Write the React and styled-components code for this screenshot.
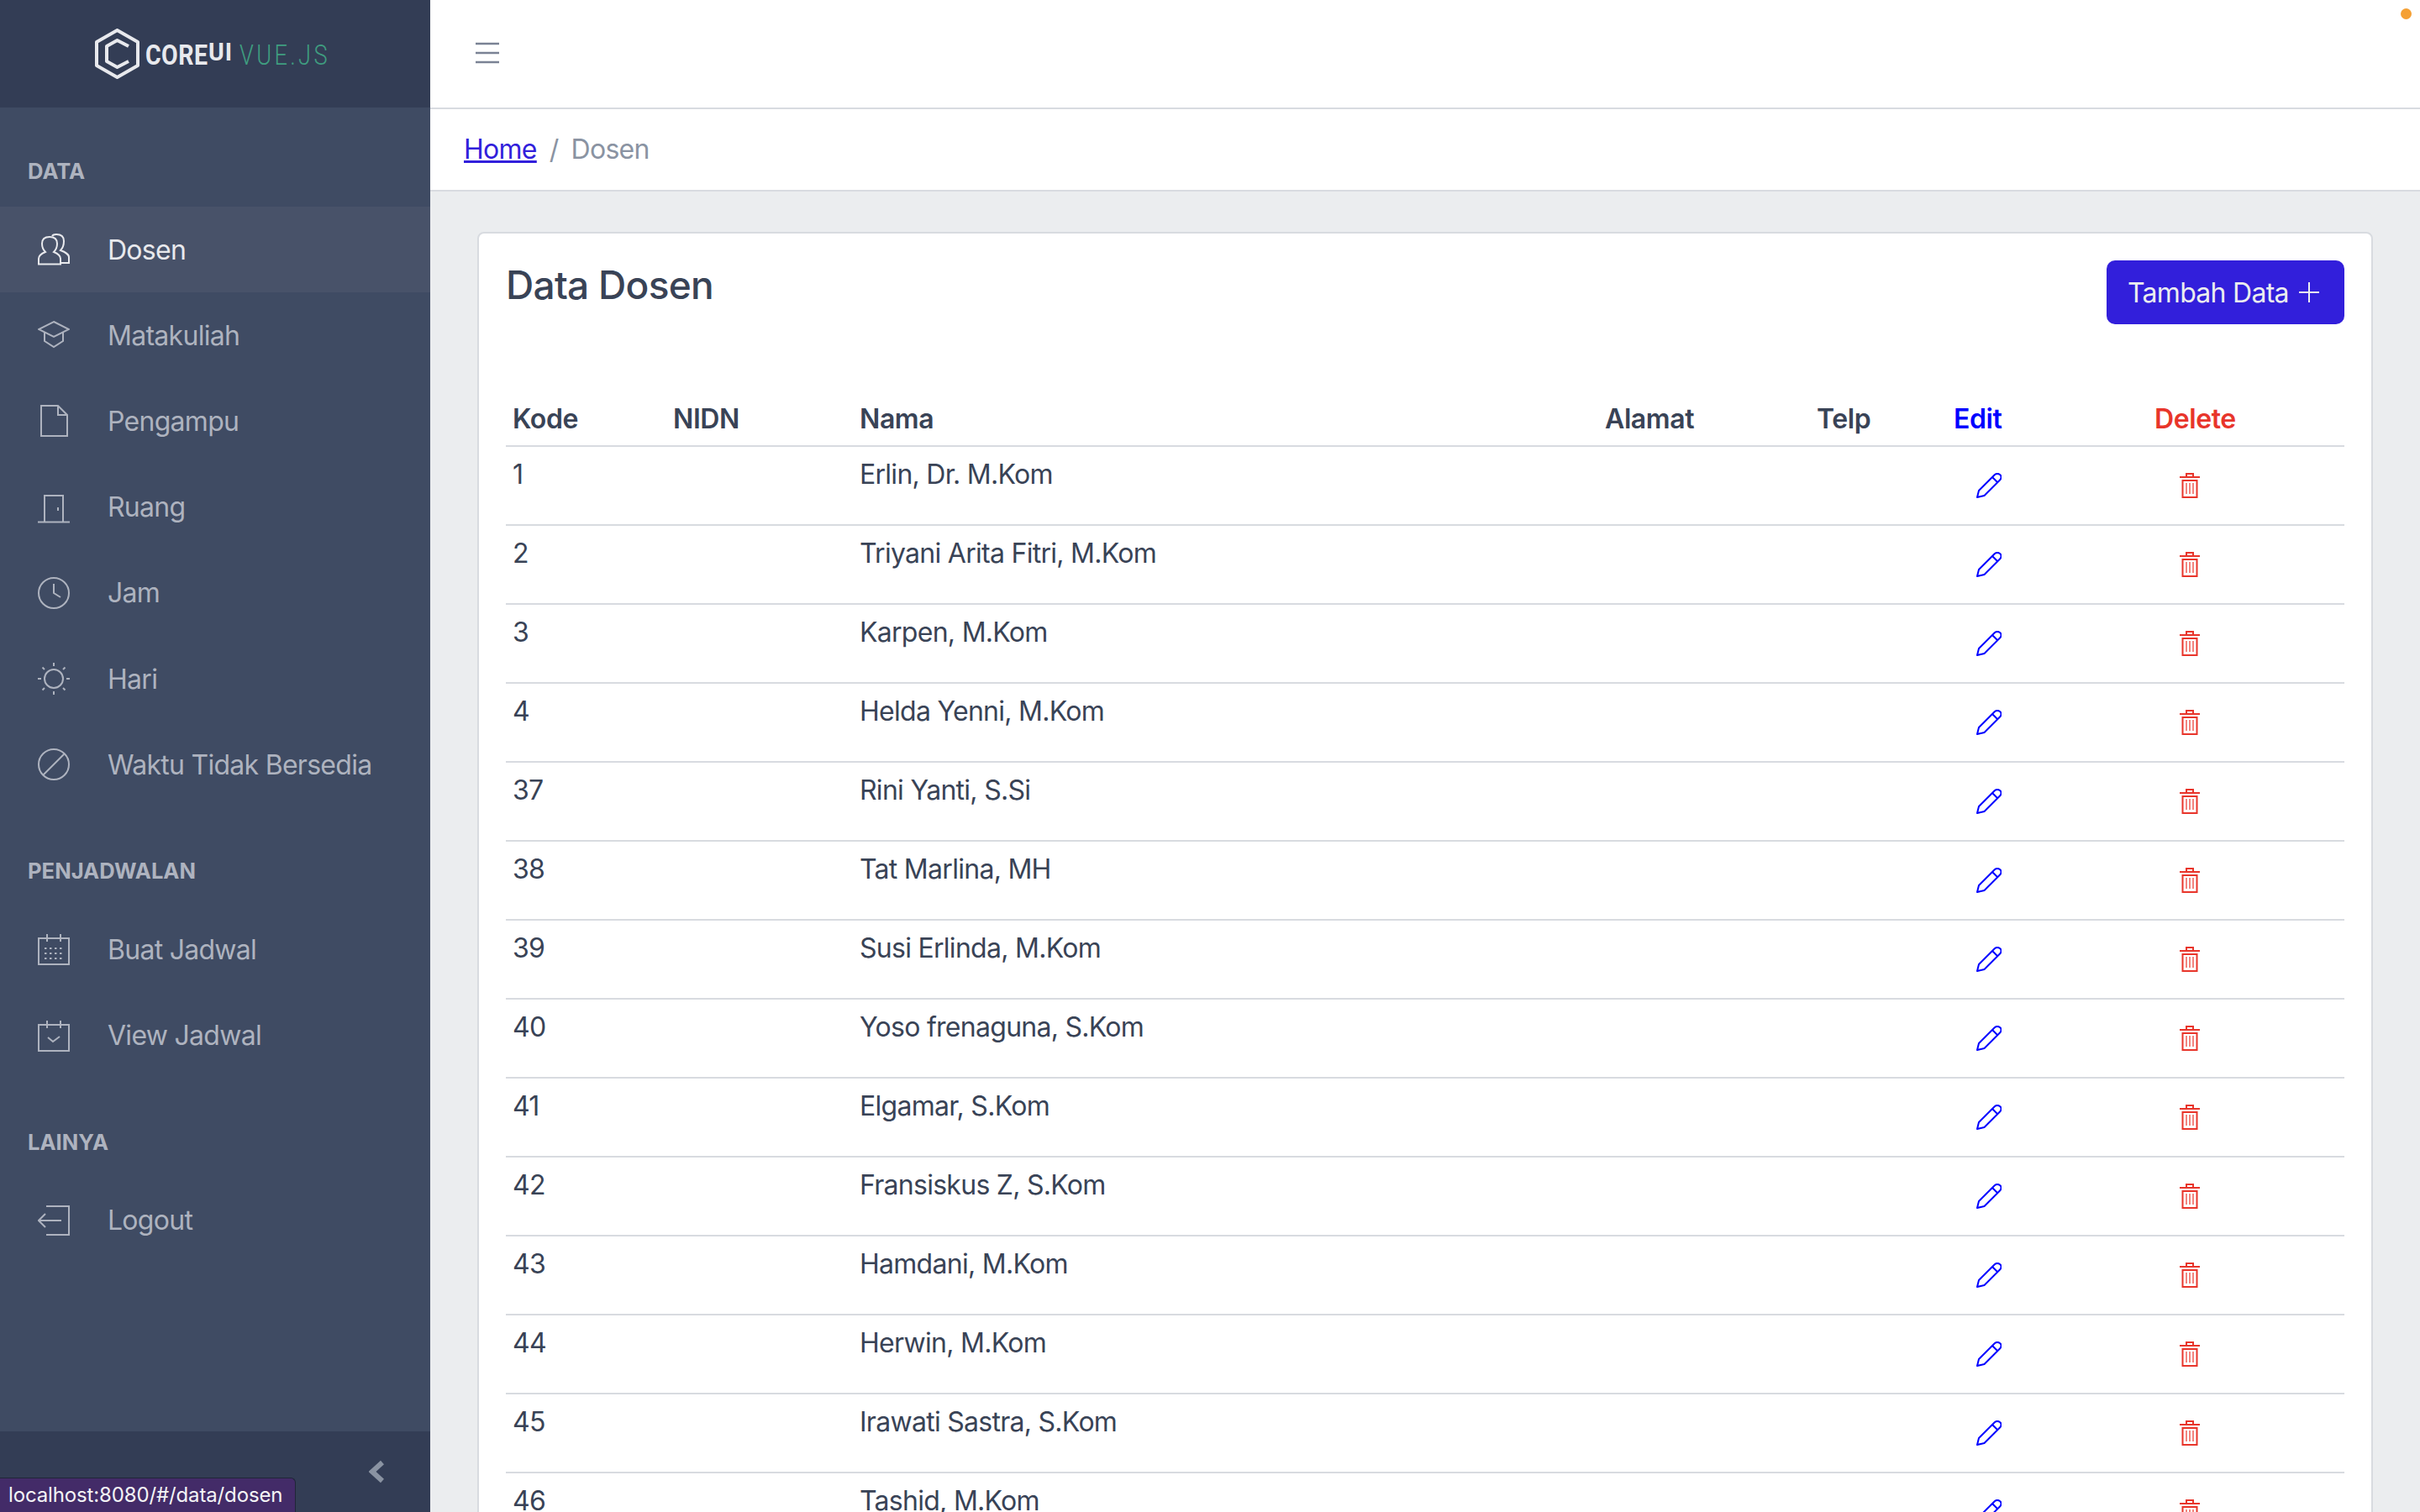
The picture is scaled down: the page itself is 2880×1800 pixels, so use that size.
import React from "react";
import styled, { createGlobalStyle } from "styled-components";

const Global = createGlobalStyle`
  html, body { margin: 0; padding: 0; height: 100%; overflow: hidden; }
  body { font-family: Inter, "Noto Sans", "Liberation Sans", sans-serif; color: #394356; background: #ebedef; }
  * { box-sizing: border-box; }
`;

const Page = styled.div`
  position: relative; display: flex; width: 2880px; height: 1800px; overflow: hidden;
`;
const Sidebar = styled.aside`
  flex: 0 0 512px; display: flex; flex-direction: column; background: #3f4b63; height: 100%;
`;
const Brand = styled.div`
  flex: 0 0 128px; display: flex; align-items: center; gap: 7px;
  background: #333d55; padding-left: 113px;
`;
const BrandText = styled.div`
  display: flex; align-items: flex-start; height: 24px; line-height: 26px;
`;
const Core = styled.span`
  display: inline-block; width: 75px; transform: scaleX(.84); transform-origin: left;
  font-family: Roboto, sans-serif; font-weight: 700; font-size: 34px; color: #e8e9ed; letter-spacing: .5px;
`;
const Ui = styled.span`
  display: inline-block; width: 37px; transform: scaleX(.95); transform-origin: left;
  font-family: Roboto, sans-serif; font-weight: 700; font-size: 30px; line-height: 20px; color: #e8e9ed; letter-spacing: 1px;
`;
const Vue = styled.span`
  display: inline-block; transform: scaleX(.8); transform-origin: left;
  font-family: Roboto, sans-serif; font-weight: 300; font-size: 34px; color: #3f9d80; letter-spacing: 4.2px;
`;
const Nav = styled.nav`
  flex: 1; display: flex; flex-direction: column;
`;
const NavTitle = styled.div`
  height: 86px; margin-top: 32px; padding: 33px 0 0 33px; line-height: 22px;
  font-size: 25.6px; font-weight: 700; color: #aeb3bf; text-transform: uppercase;
`;
const NavItem = styled.a`
  display: flex; align-items: center; height: 102.2px; padding-left: 45px; font-size: 32px; letter-spacing: -.72px;
  color: ${p => (p.$active ? "#e8e9ed" : "#aeb3bf")};
  background: ${p => (p.$active ? "#485269" : "transparent")};
`;
const NavIcon = styled.svg`
  flex: 0 0 38px; width: 38px; height: 38px; margin-right: 45px;
  fill: none; stroke: currentColor; stroke-width: 2;
`;
const SideFooter = styled.div`
  flex: 0 0 96px; display: flex; align-items: center; justify-content: flex-end; padding-right: 55px; background: #333d55;
`;
const StatusBubble = styled.div`
  position: absolute; left: 0; bottom: 0; width: 352px; height: 41px; padding: 4px 0 0 10px;
  background: #432b68; border: 1px solid #1f2638; border-left: 0; border-bottom: 0; border-top-right-radius: 6px;
  color: #f4f4f6; font-size: 24px; line-height: 32px; letter-spacing: -.14px; white-space: nowrap;
`;
const Dot = styled.span`
  position: absolute; top: 10px; right: 10px; width: 13px; height: 13px; border-radius: 50%; background: #f5a033;
`;
const Main = styled.main`
  flex: 1; min-width: 0; display: flex; flex-direction: column; height: 100%;
`;
const Header = styled.header`
  flex: 0 0 130px; display: flex; align-items: center; padding: 0 0 3px 54px;
  background: #fff; border-bottom: 2px solid #d8dbe0;
`;
const Crumbs = styled.div`
  flex: 0 0 98px; display: flex; align-items: center; padding: 0 0 1px 40px; font-size: 32px; letter-spacing: -.72px;
  background: #fff; border-bottom: 2px solid #d8dbe0; color: #8a93a2;
`;
const HomeLink = styled.a`
  color: #321fdb; text-decoration: underline;
`;
const Sep = styled.span`
  margin: 0 15px;
`;
const Body = styled.div`
  flex: 1; min-height: 0; padding: 48px 56px 0; overflow: hidden;
`;
const Card = styled.section`
  background: #fff; border: 2px solid #d8dbe0; border-radius: 8px; padding: 32px;
`;
const CardTop = styled.div`
  display: flex; justify-content: space-between; align-items: flex-start; height: 157px;
`;
const CardTitle = styled.h3`
  margin: 0; font-size: 46px; line-height: 58px; font-weight: 500; letter-spacing: -.7px; color: #394356;
`;
const AddButton = styled.button`
  display: flex; align-items: center; justify-content: space-between; width: 283px; height: 76px; padding: 0 30px 0 25px;
  background: #321fdb; color: #ebedef; border: 0; border-radius: 10px; font: inherit; font-size: 32px; letter-spacing: -.72px;
`;
const Table = styled.table`
  width: 2188px; border-collapse: collapse; table-layout: fixed; font-size: 32px;
`;
const Th = styled.th`
  height: 64px; padding: 0 8px 0; text-align: left; font-weight: 600; vertical-align: middle; letter-spacing: -.4px;
  color: ${p => p.$color || "#394356"}; border-bottom: 2px solid #d8dbe0;
`;
const Tr = styled.tr`
  height: 94px;
`;
const Td = styled.td`
  padding: 9px 8px 0; vertical-align: top; line-height: 48px; letter-spacing: -.72px; border-bottom: 2px solid #d8dbe0; color: #394356;
`;
const IconTd = styled(Td)`
  padding: 31px 0 0 ${p => p.$pad}px; line-height: 0;
`;
const Pencil = styled.svg`
  width: 30px; height: 30px; fill: none; stroke: #0000ff; stroke-width: 2; stroke-linejoin: round;
`;
const Trash = styled.svg`
  width: 24px; height: 30px; fill: none; stroke: #e8352b; stroke-width: 2;
`;

const people = <><path d="M1 36.5V30c0-4 3-6 8-8-3-3-4-6-4-10 0-5 3-8 9-8s9 3 9 8c0 4-1 7-4 10 5 2 8 4 8 8v6.500z"/><path d="M17 3c1-1.500 3-2 5-2 6 0 9 3 9 8 0 5-1 8-4 11 5 2 10 4 10 8v7h-9"/></>;
const cap = <><path d="M19 3l18 9-18 9-18-9z"/><path d="M8 16v10l11 7 11-7V16"/></>;
const file = <path d="M4 1h20l11 11v25H4zM24 1v11h11"/>;
const door = <><path d="M8 36V5h22v31M0 36.500h38"/><path d="M24 19v4"/></>;
const clock = <><circle cx="19" cy="19" r="18"/><path d="M19 8v11l8 5"/></>;
const sun = <><circle cx="19" cy="19" r="11"/><path d="M19 0v4M19 34v4M0 19h4M34 19h4M5.500 5.500l2.500 2.500M30 30l2.500 2.500M5.500 32.500L8 30M30 8l2.500-2.500"/></>;
const ban = <><circle cx="19" cy="19" r="18"/><path d="M6.500 31.500l25-25"/></>;
const calendar = <><path d="M1 6h36v31H1zM11 1v9M27 1v9"/><path strokeDasharray="2.500 3.500" d="M8 18h24M8 24h24M8 30h24"/></>;
const calCheck = <><path d="M1 6h36v31H1zM11 1v9M27 1v9"/><path d="M12 21l6 5 8-6"/></>;
const logout = <><path d="M10 2h27v34H10"/><path d="M1 19h27M9 11l-8 8 8 8"/></>;

const sections = [
  ["Data", [["Dosen", people, true], ["Matakuliah", cap], ["Pengampu", file], ["Ruang", door], ["Jam", clock], ["Hari", sun], ["Waktu Tidak Bersedia", ban]]],
  ["Penjadwalan", [["Buat Jadwal", calendar], ["View Jadwal", calCheck]]],
  ["Lainya", [["Logout", logout]]],
];

const rows = [
  [1, "Erlin, Dr. M.Kom"], [2, "Triyani Arita Fitri, M.Kom"], [3, "Karpen, M.Kom"], [4, "Helda Yenni, M.Kom"],
  [37, "Rini Yanti, S.Si"], [38, "Tat Marlina, MH"], [39, "Susi Erlinda, M.Kom"], [40, "Yoso frenaguna, S.Kom"],
  [41, "Elgamar, S.Kom"], [42, "Fransiskus Z, S.Kom"], [43, "Hamdani, M.Kom"], [44, "Herwin, M.Kom"],
  [45, "Irawati Sastra, S.Kom"], [46, "Tashid, M.Kom"],
];
const colWidths = [191, 222, 887, 252, 163, 239, 234];

export default function App() {
  return (
    <Page>
      <Global />
      <Sidebar>
        <Brand>
          <svg width="53" height="60" viewBox="0 0 53 60" fill="none" stroke="#e8e9ed" strokeWidth="4" strokeLinejoin="round">
            <path d="M26.500 2L51 16v28L26.500 58 2 44V16z" />
            <path d="M40 21l-13.500-7L14 21v18l12.500 7L40 39" />
          </svg>
          <BrandText>
            <Core>CORE</Core><Ui>UI</Ui><Vue>VUE.JS</Vue>
          </BrandText>
        </Brand>
        <Nav>
          {sections.map(([title, items]) => (
            <React.Fragment key={title}>
              <NavTitle>{title}</NavTitle>
              {items.map(([label, icon, active]) => (
                <NavItem key={label} $active={active}>
                  <NavIcon viewBox="0 0 38 38">{icon}</NavIcon>
                  {label}
                </NavItem>
              ))}
            </React.Fragment>
          ))}
        </Nav>
        <SideFooter>
          <svg width="18" height="28" viewBox="0 0 18 28" fill="none" stroke="#8a93a2" strokeWidth="6"><path d="M16 3L4 14l12 11" /></svg>
        </SideFooter>
      </Sidebar>
      <Main>
        <Header>
          <svg width="28" height="26" viewBox="0 0 28 26" stroke="#7a8294" strokeWidth="2.500"><path d="M0 2h28M0 13h28M0 24h28" /></svg>
        </Header>
        <Crumbs>
          <HomeLink>Home</HomeLink><Sep>/</Sep><span>Dosen</span>
        </Crumbs>
        <Body>
          <Card>
            <CardTop>
              <CardTitle>Data Dosen</CardTitle>
              <AddButton>
                Tambah Data
                <svg width="24" height="24" viewBox="0 0 24 24" stroke="#ebedef" strokeWidth="2"><path d="M12 0v24M0 12h24" /></svg>
              </AddButton>
            </CardTop>
            <Table>
              <colgroup>{colWidths.map((w, i) => <col key={i} width={w} />)}</colgroup>
              <thead>
                <tr>
                  <Th>Kode</Th><Th>NIDN</Th><Th>Nama</Th><Th>Alamat</Th><Th>Telp</Th>
                  <Th $color="#0000ff">Edit</Th><Th $color="#e8352b">Delete</Th>
                </tr>
              </thead>
              <tbody>
                {rows.map(([kode, nama]) => (
                  <Tr key={kode}>
                    <Td>{kode}</Td><Td /><Td>{nama}</Td><Td /><Td />
                    <IconTd $pad={35}>
                      <Pencil viewBox="0 0 30 30">
                        <path d="M1 29l2-8L22 2c2-1.500 4-1.500 6 0s2 4 .5 6L9.500 27z" /><path d="M19 5l6 6" />
                      </Pencil>
                    </IconTd>
                    <IconTd $pad={38}>
                      <Trash viewBox="0 0 24 30">
                        <path d="M0 5h24M8 5V1h8v4M3.500 9h17v20h-17z" /><path strokeWidth="1.500" opacity=".8" d="M8 12v13M12 12v13M16 12v13" />
                      </Trash>
                    </IconTd>
                  </Tr>
                ))}
              </tbody>
            </Table>
          </Card>
        </Body>
      </Main>
      <StatusBubble>localhost:8080/#/data/dosen</StatusBubble>
      <Dot />
    </Page>
  );
}
